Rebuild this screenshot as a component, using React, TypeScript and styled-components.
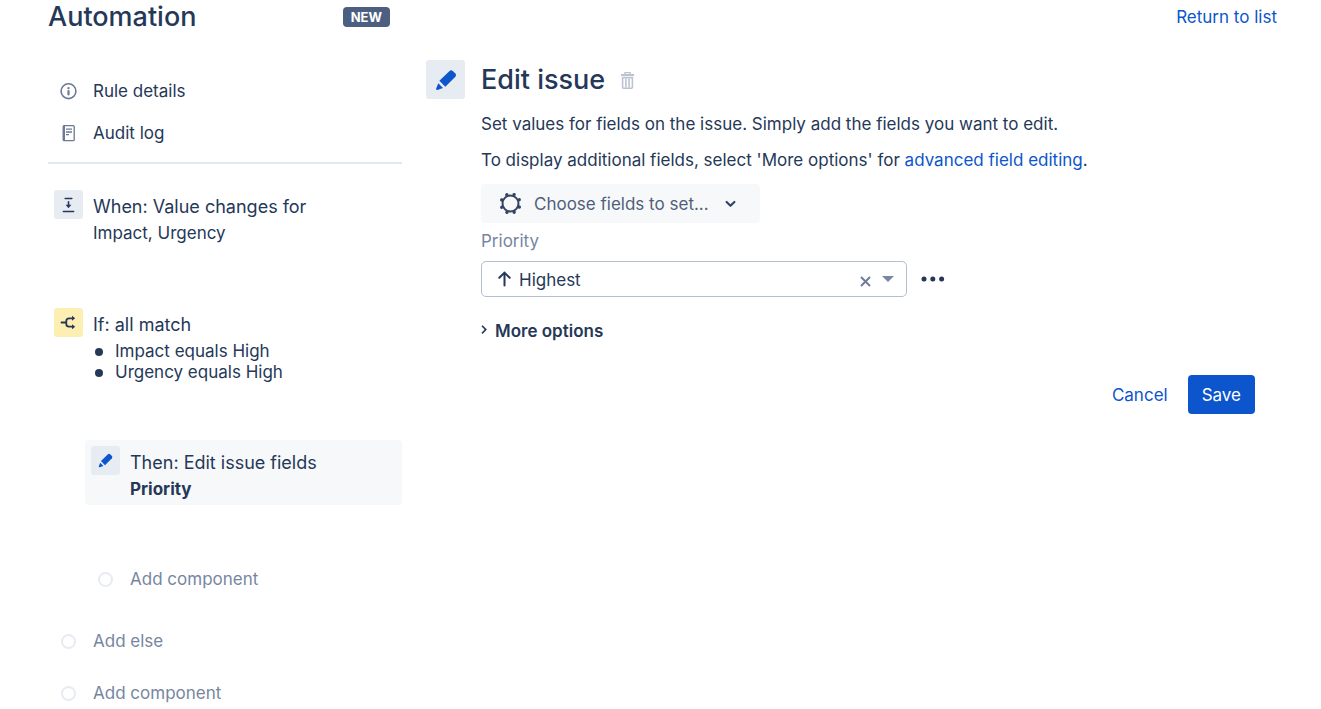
import React from "react";
import styled, { createGlobalStyle } from "styled-components";

const color = {
  text: "#253858",
  subtle: "#7786a0",
  link: "#0c55cc",
  tile: "#e7ebf2",
  surface: "#f7f8f9",
  line: "#e4e8ef",
};

const GlobalStyle = createGlobalStyle`
  *, *::before, *::after { box-sizing: border-box; }
  body {
    margin: 0;
    background: #fff;
    color: ${color.text};
    font: 400 17px/24px Inter, "Liberation Sans", sans-serif;
  }
  h1, h2, h3, p, ul { margin: 0; padding: 0; }
  button, select { font: inherit; color: inherit; }
  button { cursor: pointer; border: 0; background: none; padding: 0; }
  a { color: ${color.link}; text-decoration: none; }
  svg { display: block; flex: none; }
`;

const Page = styled.div`
  display: grid;
  grid-template-columns: 354px minmax(0, 1fr);
  column-gap: 24px;
  padding: 0 44px 0 48px;
`;

const Bar = styled.header`
  display: flex;
  align-items: center;
  justify-content: ${(p: { $end?: boolean }) => (p.$end ? "flex-end" : "space-between")};
  height: 34px;
`;

const PageTitle = styled.h1`
  font-size: 27px;
  line-height: 36px;
  font-weight: 500;
`;

const Badge = styled.span`
  margin-right: 12px;
  padding: 0 8px;
  border-radius: 4px;
  background: #4d5f80;
  color: #fff;
  font-size: 13px;
  line-height: 20px;
  font-weight: 700;
`;

const Nav = styled.nav`
  margin-top: 36px;
  padding-bottom: 8px;
  border-bottom: 2px solid ${color.line};
`;

const NavLink = styled.a`
  display: flex;
  align-items: center;
  gap: 16px;
  height: 42px;
  padding-left: 12px;
  color: ${color.text};
`;

const Steps = styled.div`
  display: flex;
  flex-direction: column;
  padding-top: 26px;
`;

const Step = styled.section<{ $gap: number; $selected?: boolean }>`
  display: flex;
  align-items: flex-start;
  gap: 10px;
  margin: 0 0 ${(p) => p.$gap}px ${(p) => (p.$selected ? 37 : 0)}px;
  padding: ${(p) => (p.$selected ? "6px 6px 5px" : "0 6px")};
  border-radius: 4px;
  background: ${(p) => (p.$selected ? color.surface : "none")};
`;

const Tile = styled.span<{ $size: number; $tone?: string }>`
  display: grid;
  place-items: center;
  flex: none;
  width: ${(p) => p.$size}px;
  height: ${(p) => p.$size}px;
  border-radius: 3px;
  background: ${(p) => p.$tone ?? color.tile};
`;

const StepBody = styled.div`
  padding-top: 3px;
`;

const StepTitle = styled.h3`
  margin-bottom: 2px;
  font-size: 18px;
  line-height: 28px;
  font-weight: 400;
`;

const StepText = styled.p<{ $bold?: boolean }>`
  line-height: 21px;
  font-weight: ${(p) => (p.$bold ? 700 : 400)};
`;

const Conditions = styled.ul`
  list-style: none;
`;

const Condition = styled.li`
  display: flex;
  align-items: center;
  gap: 12px;
  padding-left: 2px;
  line-height: 21px;
  &::before {
    content: "";
    width: 8px;
    height: 8px;
    border-radius: 50%;
    background: currentColor;
  }
`;

const AddButton = styled.button<{ $gap: number; $nested?: boolean }>`
  display: flex;
  align-items: center;
  align-self: flex-start;
  gap: 17px;
  margin: 0 0 ${(p) => p.$gap}px ${(p) => (p.$nested ? 50 : 13)}px;
  color: ${color.subtle};
  &::before {
    content: "";
    width: 15px;
    height: 15px;
    border: 2px solid ${color.tile};
    border-radius: 50%;
  }
`;

const Editor = styled.section`
  display: flex;
  align-items: flex-start;
  gap: 16px;
  margin-top: 26px;
`;

const EditorBody = styled.div`
  flex: 1;
  min-width: 0;
  padding-right: 22px;
`;

const EditorHead = styled.div`
  display: flex;
  align-items: center;
  gap: 15px;
  height: 40px;
  margin-bottom: 12px;
`;

const EditorTitle = styled.h2`
  font-size: 27px;
  line-height: 36px;
  font-weight: 500;
`;

const Paragraph = styled.p`
  margin-bottom: 12px;
`;

const FieldPicker = styled.button`
  display: flex;
  align-items: center;
  gap: 12px;
  height: 39px;
  padding: 0 24px 0 18px;
  border-radius: 4px;
  background: ${color.surface};
  color: #505f79;
`;

const PickerLabel = styled.span`
  margin-right: 4px;
`;

const FieldLabel = styled.label`
  display: block;
  margin: 6px 0 8px;
  color: ${color.subtle};
`;

const FieldRow = styled.div`
  display: flex;
  align-items: center;
  gap: 14px;
`;

const SelectBox = styled.div`
  display: flex;
  align-items: center;
  gap: 8px;
  width: 426px;
  height: 36px;
  padding: 0 12px 0 16px;
  border: 1px solid #b3bed2;
  border-radius: 5px;
`;

const Select = styled.select`
  flex: 1;
  min-width: 0;
  height: 34px;
  padding: 1px 0 0;
  border: 0;
  outline: 0;
  appearance: none;
  background: none;
`;

const ClearButton = styled.button`
  margin-right: 3px;
`;

const MoreOptions = styled.button`
  display: flex;
  align-items: center;
  gap: 8px;
  margin-top: 22px;
  font-weight: 600;
`;

const Actions = styled.div`
  display: flex;
  justify-content: flex-end;
  gap: 4px;
  margin-top: 32px;
`;

const ActionButton = styled.button<{ $primary?: boolean }>`
  height: 39px;
  padding: 0 ${(p) => (p.$primary ? 14 : 16)}px;
  border-radius: 4px;
  background: ${(p) => (p.$primary ? color.link : "none")};
  color: ${(p) => (p.$primary ? "#fff" : color.link)};
`;

const InfoIcon = () => (
  <svg width="17" height="17" viewBox="0 0 17 17" fill="none" stroke="#6b7a95">
    <circle cx="8.5" cy="8.2" r="7.4" strokeWidth="1.6" />
    <circle cx="8.5" cy="5.1" r="1.2" fill="#6b7a95" stroke="none" />
    <path d="M8.5 8v3.4" strokeWidth="2.2" strokeLinecap="round" />
  </svg>
);

const LogIcon = () => (
  <svg width="17" height="17" viewBox="0 0 17 17" fill="none" stroke="#6b7a95" strokeWidth="1.3">
    <rect x="3.2" y="0.7" width="11" height="15" rx="1" />
    <path d="M4 .7v15" strokeWidth="2" />
    <path d="M6 4.2h6M6 7h6M6 9.7h3" />
  </svg>
);

const ValueIcon = () => (
  <svg width="15" height="16" viewBox="0 0 15 16" fill="none" stroke={color.text} strokeWidth="1.6">
    <path d="M4.2 1.5h6.6M2.4 14.5h10.2" strokeLinecap="round" strokeWidth="1.6" />
    <path d="M7.5 4.2v5" />
    <path d="M4.6 7.7h5.8L7.5 11.2z" fill={color.text} stroke="none" />
  </svg>
);

const BranchIcon = () => (
  <svg width="17" height="15" viewBox="0 0 17 15" fill="none" stroke={color.text} strokeWidth="1.8">
    <path d="M1.5 7.5H6M12 3.3H9Q6.3 3.3 6.3 6v3Q6.3 11.7 9 11.7h3" strokeLinecap="round" />
    <path d="M12 .8l3.2 2.5L12 5.8zM12 9.2l3.2 2.5-3.2 2.5z" fill={color.text} stroke="none" />
  </svg>
);

const PencilIcon = ({ size }: { size: number }) => (
  <svg width={size} height={size} viewBox="0 0 22 22" fill={color.link}>
    <path d="M4.4 11.8 14.6 1.9Q16.2.5 17.8 1.9L20.4 4.5Q21.8 6.1 20.4 7.7L10.3 17.8z" />
    <path d="M3.3 14.2 8 18.9 2.4 20.9Q.8 21.2 1.2 19.6z" />
  </svg>
);

const TrashIcon = () => (
  <svg width="15" height="18" viewBox="0 0 15 18" fill="none" stroke="#bcc3d0">
    <path d="M1 4h13" strokeWidth="2" />
    <path d="M5 3.4V1.6h5v1.8" strokeWidth="1.4" />
    <path d="M2.6 6.6h9.8v9.6q0 1-1 1H3.6q-1 0-1-1z" strokeWidth="1.6" />
    <path d="M5.9 7.5v9M9.1 7.5v9" strokeWidth="1.6" />
  </svg>
);

const GearIcon = () => (
  <svg width="23" height="23" viewBox="0 0 23 23" fill="none" stroke="#344563">
    <circle cx="11.5" cy="11.5" r="8" strokeWidth="2" />
    {[22, 67, 112, 157, 202, 247, 292, 337].map((angle) => (
      <circle key={angle} cx="11.5" cy="2" r="1.7" fill="#344563" stroke="none" transform={`rotate(${angle} 11.5 11.5)`} />
    ))}
  </svg>
);

const ChevronDown = () => (
  <svg width="11" height="8" viewBox="0 0 11 8" fill="none" stroke="#344563" strokeWidth="2.2" strokeLinecap="round" strokeLinejoin="round">
    <path d="M1.6 2 5.5 5.8 9.4 2" />
  </svg>
);

const ChevronRight = () => (
  <svg width="6" height="12" viewBox="0 0 6 12" fill="none" stroke={color.text} strokeWidth="1.6">
    <path d="M1 .8l3.8 3.8L1 8.4" />
  </svg>
);

const ArrowUp = () => (
  <svg width="13" height="16" viewBox="0 0 13 16" fill="none" stroke={color.text} strokeWidth="2" strokeLinecap="round" strokeLinejoin="round">
    <path d="M6.5 14.5V1.5M1.3 6.8l5.2-5.2 5.2 5.2" />
  </svg>
);

const CrossIcon = () => (
  <svg width="11" height="18" viewBox="0 0 11 18" fill="none" stroke="#6f7e9a" strokeWidth="2">
    <path d="M1 7l9 9M10 7l-9 9" />
  </svg>
);

const Caret = () => (
  <svg width="12" height="6" viewBox="0 0 12 6" fill="#7a87a3">
    <path d="M0 0h12L6 6z" />
  </svg>
);

const Dots = () => (
  <svg width="24" height="6" viewBox="0 0 24 6" fill={color.text}>
    <circle cx="3" cy="3" r="2.5" />
    <circle cx="11.8" cy="3" r="2.5" />
    <circle cx="20.6" cy="3" r="2.5" />
  </svg>
);

export default function App() {
  return (
    <>
      <GlobalStyle />
      <Page>
        <aside>
          <Bar>
            <PageTitle>Automation</PageTitle>
            <Badge>NEW</Badge>
          </Bar>
          <Nav>
            <NavLink href="#details"><InfoIcon />Rule details</NavLink>
            <NavLink href="#audit"><LogIcon />Audit log</NavLink>
          </Nav>
          <Steps>
            <Step $gap={64}>
              <Tile $size={29}><ValueIcon /></Tile>
              <StepBody>
                <StepTitle>When: Value changes for</StepTitle>
                <StepText>Impact, Urgency</StepText>
              </StepBody>
            </Step>
            <Step $gap={57}>
              <Tile $size={29} $tone="#fdefb2"><BranchIcon /></Tile>
              <StepBody>
                <StepTitle>If: all match</StepTitle>
                <Conditions>
                  <Condition>Impact equals High</Condition>
                  <Condition>Urgency equals High</Condition>
                </Conditions>
              </StepBody>
            </Step>
            <Step $gap={62} $selected>
              <Tile $size={29}><PencilIcon size={15} /></Tile>
              <StepBody>
                <StepTitle>Then: Edit issue fields</StepTitle>
                <StepText $bold>Priority</StepText>
              </StepBody>
            </Step>
            <AddButton type="button" $gap={38} $nested>Add component</AddButton>
            <AddButton type="button" $gap={28}>Add else</AddButton>
            <AddButton type="button" $gap={0}>Add component</AddButton>
          </Steps>
        </aside>
        <main>
          <Bar $end>
            <a href="#list">Return to list</a>
          </Bar>
          <Editor>
            <Tile $size={39}><PencilIcon size={22} /></Tile>
            <EditorBody>
              <EditorHead>
                <EditorTitle>Edit issue</EditorTitle>
                <button type="button" aria-label="Delete"><TrashIcon /></button>
              </EditorHead>
              <Paragraph>Set values for fields on the issue. Simply add the fields you want to edit.</Paragraph>
              <Paragraph>
                To display additional fields, select 'More options' for <a href="#advanced">advanced field editing</a>.
              </Paragraph>
              <FieldPicker type="button" aria-haspopup="listbox">
                <GearIcon />
                <PickerLabel>Choose fields to set...</PickerLabel>
                <ChevronDown />
              </FieldPicker>
              <FieldLabel htmlFor="priority">Priority</FieldLabel>
              <FieldRow>
                <SelectBox>
                  <ArrowUp />
                  <Select id="priority" defaultValue="Highest">
                    <option>Highest</option>
                  </Select>
                  <ClearButton type="button" aria-label="Clear"><CrossIcon /></ClearButton>
                  <Caret />
                </SelectBox>
                <button type="button" aria-label="More actions"><Dots /></button>
              </FieldRow>
              <MoreOptions type="button" aria-expanded="false"><ChevronRight />More options</MoreOptions>
              <Actions>
                <ActionButton type="button">Cancel</ActionButton>
                <ActionButton type="submit" $primary>Save</ActionButton>
              </Actions>
            </EditorBody>
          </Editor>
        </main>
      </Page>
    </>
  );
}
